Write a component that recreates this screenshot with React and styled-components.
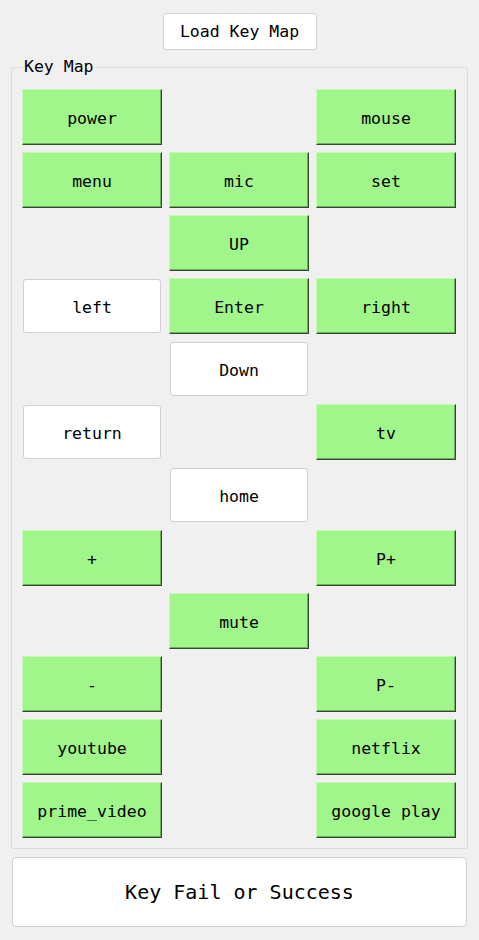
import { createGlobalStyle, styled } from "styled-components";

const GlobalStyle = createGlobalStyle`
  html, body {
    margin: 0;
    padding: 0;
    background: #f0f0f0;
  }
  body {
    font-family: "DejaVu Sans Mono", "Liberation Mono", monospace;
    color: #000;
  }
`;

const keys = [
  { label: "power", row: 1, col: 1 },
  { label: "mouse", row: 1, col: 3 },
  { label: "menu", row: 2, col: 1 },
  { label: "mic", row: 2, col: 2 },
  { label: "set", row: 2, col: 3 },
  { label: "UP", row: 3, col: 2 },
  { label: "left", row: 4, col: 1, plain: true },
  { label: "Enter", row: 4, col: 2 },
  { label: "right", row: 4, col: 3 },
  { label: "Down", row: 5, col: 2, plain: true },
  { label: "return", row: 6, col: 1, plain: true },
  { label: "tv", row: 6, col: 3 },
  { label: "home", row: 7, col: 2, plain: true },
  { label: "+", row: 8, col: 1 },
  { label: "P+", row: 8, col: 3 },
  { label: "mute", row: 9, col: 2 },
  { label: "-", row: 10, col: 1 },
  { label: "P-", row: 10, col: 3 },
  { label: "youtube", row: 11, col: 1 },
  { label: "netflix", row: 11, col: 3 },
  { label: "prime_video", row: 12, col: 1 },
  { label: "google play", row: 12, col: 3 },
];

const App = () => {
  return (
    <Wrapper>
      <GlobalStyle />
      <TopBar>
        <LoadButton>Load Key Map</LoadButton>
      </TopBar>
      <Group>
        <Legend>Key Map</Legend>
        <KeyGrid>
          {keys.map((k) => (
            <KeyButton key={k.label} $row={k.row} $col={k.col} $plain={k.plain}>
              {k.label}
            </KeyButton>
          ))}
        </KeyGrid>
      </Group>
      <Status>Key Fail or Success</Status>
    </Wrapper>
  );
};

const Wrapper = styled.div`
  width: 479px;
  height: 940px;
  display: flex;
  flex-direction: column;
`;

const TopBar = styled.div`
  display: flex;
  justify-content: center;
  padding-top: 13px;
`;

const LoadButton = styled.button`
  width: 154px;
  height: 37px;
  background: #fff;
  border: 1px solid #d0d0d0;
  border-radius: 3px;
  font-family: inherit;
  font-size: 16.5px;
  color: #000;
  padding: 0;
`;

const Group = styled.fieldset`
  margin: 7px 11px 0 11px;
  padding: 12px 12px 10px 10px;
  border: 1px solid #dcdcdc;
  border-radius: 2px;
  min-width: 0;
`;

const Legend = styled.legend`
  margin-left: 1px;
  padding: 0 1px;
  font-size: 16.5px;
  line-height: 20px;
`;

const KeyGrid = styled.div`
  display: grid;
  grid-template-columns: 140px 140px 140px;
  grid-template-rows: repeat(12, 56px);
  column-gap: 7px;
  row-gap: 7px;
`;

const KeyButton = styled.button`
  grid-row: ${(p) => p.$row};
  grid-column: ${(p) => p.$col};
  font-family: inherit;
  font-size: 16.5px;
  color: #000;
  padding: 3px 0 0 0;
  ${(p) =>
    p.$plain
      ? `
    margin: 1px;
    background: #fff;
    border: 1px solid #d0d0d0;
    border-radius: 3px;
  `
      : `
    background: #a0f58b;
    border: 1px solid;
    border-color: #c4fab6 #2e4a28 #2e4a28 #c4fab6;
    box-shadow: inset -1px -1px 0 #6fae5f;
  `}
`;

const Status = styled.div`
  margin: 8px 12px 0 12px;
  height: 70px;
  box-sizing: border-box;
  background: #fff;
  border: 1px solid #cfcfcf;
  border-radius: 4px;
  display: flex;
  align-items: center;
  justify-content: center;
  font-size: 20px;
`;

export default App;
